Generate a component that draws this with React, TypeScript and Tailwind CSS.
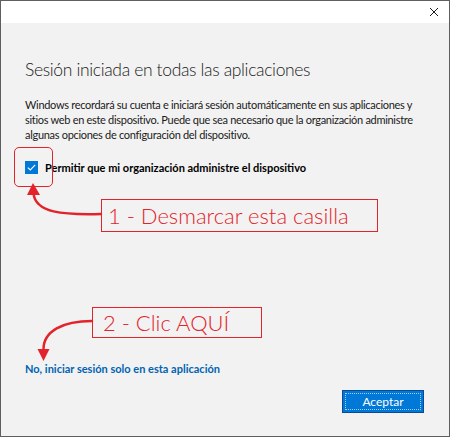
import * as React from 'react';

function CloseIcon() {
	return (
		<svg width="10" height="10" viewBox="0 0 10 10" className="block">
			<path d="M1 1 L9 9 M9 1 L1 9" stroke="#1a1a1a" strokeWidth="1" fill="none" />
		</svg>
	);
}

function CheckBox() {
	return (
		<span className="flex h-[13px] w-[13px] shrink-0 items-center justify-center bg-[#0078d7]">
			<svg width="9" height="9" viewBox="0 0 9 9">
				<path d="M0.8 4.6 L3.3 7 L8.2 1.8" stroke="#ffffff" strokeWidth="1.1" fill="none" />
			</svg>
		</span>
	);
}

// Red hand-drawn annotations over the dialog
function Annotations() {
	const red = '#e3232b';
	return (
		<>
			<div className="absolute left-[13px] top-[146px] h-[40px] w-[39px] rounded-[5px] border-[1.5px] border-[#e3232b]" />
			<div className="absolute left-[100px] top-[198px] flex h-[33px] w-[277px] items-center border-[1.5px] border-[#e3232b] pl-[6px] font-['Lato',sans-serif] text-[22px] font-light text-[#e3232b]">
				1 - Desmarcar esta casilla
			</div>
			<div className="absolute left-[91px] top-[306px] flex h-[31px] w-[170px] items-center border-[1.5px] border-[#e3232b] pl-[10px] font-['Lato',sans-serif] text-[22px] font-light text-[#e3232b]">
				2 - Clic AQUÍ
			</div>
			<svg className="pointer-events-none absolute left-0 top-0" width="450" height="437" viewBox="0 0 450 437">
				<path d="M100 213 C62 214 34 212 32.5 192" stroke={red} strokeWidth="2.5" fill="none" strokeLinecap="round" />
				<path d="M32 182 L26 194 L39 194 Z" fill={red} />
				<path d="M91 320 C62 320 42 330 42.5 349" stroke={red} strokeWidth="2.5" fill="none" strokeLinecap="round" />
				<path d="M42.5 360 L36.5 348 L48.5 348 Z" fill={red} />
			</svg>
		</>
	);
}

export default function App() {
	return (
		<div className="relative flex h-[437px] w-[450px] flex-col overflow-hidden border border-[#5e5e5e] bg-[#f2f2f2] font-['Lato',sans-serif] text-[#000000]">
			{/* Title bar */}
			<div className="flex h-[22px] items-center justify-end bg-white pr-[10px]">
				<CloseIcon />
			</div>

			<div className="flex flex-1 flex-col px-[24px]">
				<h1 className="mt-[34px] whitespace-nowrap text-[17.5px] font-light leading-[26px] tracking-[-0.35px] text-[#1a1a1a]">
					Sesión iniciada en todas las aplicaciones
				</h1>

				<p className="mt-[14px] whitespace-nowrap text-[11px] leading-[15px] tracking-[-0.3px] text-[#1a1a1a]">
					Windows recordará su cuenta e iniciará sesión automáticamente en sus aplicaciones y
					<br />
					sitios web en este dispositivo. Puede que sea necesario que la organización administre
					<br />
					algunas opciones de configuración del dispositivo.
				</p>

				<label className="mt-[18px] flex items-center gap-[7px]">
					<CheckBox />
					<span className="whitespace-nowrap text-[11px] font-bold leading-[15px]">
						Permitir que mi organización administre el dispositivo
					</span>
				</label>

				<div className="flex-1" />

				<a className="mb-[14px] whitespace-nowrap text-[11px] font-bold leading-[15px] text-[#0063b1]">
					No, iniciar sesión solo en esta aplicación
				</a>

				<div className="mb-[23px] flex justify-end pr-[1px]">
					<button
						type="button"
						className="relative flex h-[23px] w-[82px] items-center justify-center border border-[#0a4b93] bg-[#0078d7] text-[12px] text-white"
					>
						<span className="absolute inset-[2px] border border-dotted border-[#9fd0f5]" />
						Aceptar
					</button>
				</div>
			</div>

			<Annotations />
		</div>
	);
}
